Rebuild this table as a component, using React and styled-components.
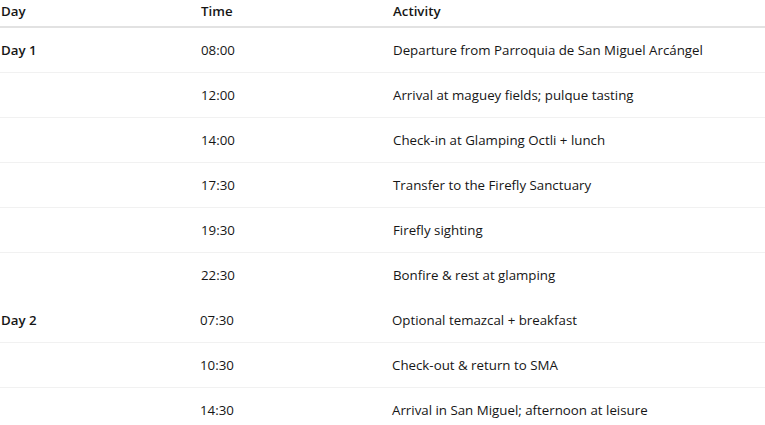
import React from "react";
import styled, { createGlobalStyle } from "styled-components";

const Global = createGlobalStyle`
  html, body { margin: 0; padding: 0; background: #ffffff; }
  body { font-family: "Open Sans", "Noto Sans", sans-serif; color: #161616; }
`;

const Page = styled.div`
  width: 765px;
  height: 425px;
  overflow: hidden;
  background: #fff;
`;

const Row = styled.div`
  display: grid;
  grid-template-columns: ${(p) => p.$cols};
  align-items: center;
  height: ${(p) => (p.$head ? "28px" : "45px")};
  border-bottom: ${(p) =>
    p.$head ? "2px solid #e2e2e2" : p.$noLine ? "1px solid transparent" : "1px solid #f1f1f1"};
  box-sizing: border-box;
  font-size: 13.3px;
  padding-bottom: ${(p) => (p.$head ? "4px" : "0")};
`;

const Cell = styled.div`
  padding-left: 1px;
  font-weight: ${(p) => (p.$bold ? 600 : 400)};
  white-space: nowrap;
`;

const groups = [
  {
    day: "Day 1",
    cols: "200px 192px 1fr",
    items: [
      ["08:00", "Departure from Parroquia de San Miguel Arcángel"],
      ["12:00", "Arrival at maguey fields; pulque tasting"],
      ["14:00", "Check-in at Glamping Octli + lunch"],
      ["17:30", "Transfer to the Firefly Sanctuary"],
      ["19:30", "Firefly sighting"],
      ["22:30", "Bonfire & rest at glamping"],
    ],
  },
  {
    day: "Day 2",
    cols: "199px 192px 1fr",
    items: [
      ["07:30", "Optional temazcal + breakfast"],
      ["10:30", "Check-out & return to SMA"],
      ["14:30", "Arrival in San Miguel; afternoon at leisure"],
    ],
  },
];

export default function App() {
  return (
    <Page>
      <Global />
      <Row $head $cols="200px 192px 1fr">
        <Cell $bold>Day</Cell>
        <Cell $bold>Time</Cell>
        <Cell $bold>Activity</Cell>
      </Row>
      {groups.map((g) =>
        g.items.map(([t, a], i) => (
          <Row key={g.day + t} $cols={g.cols} $noLine={i === g.items.length - 1}>
            <Cell $bold>{i === 0 ? g.day : ""}</Cell>
            <Cell>{t}</Cell>
            <Cell>{a}</Cell>
          </Row>
        ))
      )}
    </Page>
  );
}
